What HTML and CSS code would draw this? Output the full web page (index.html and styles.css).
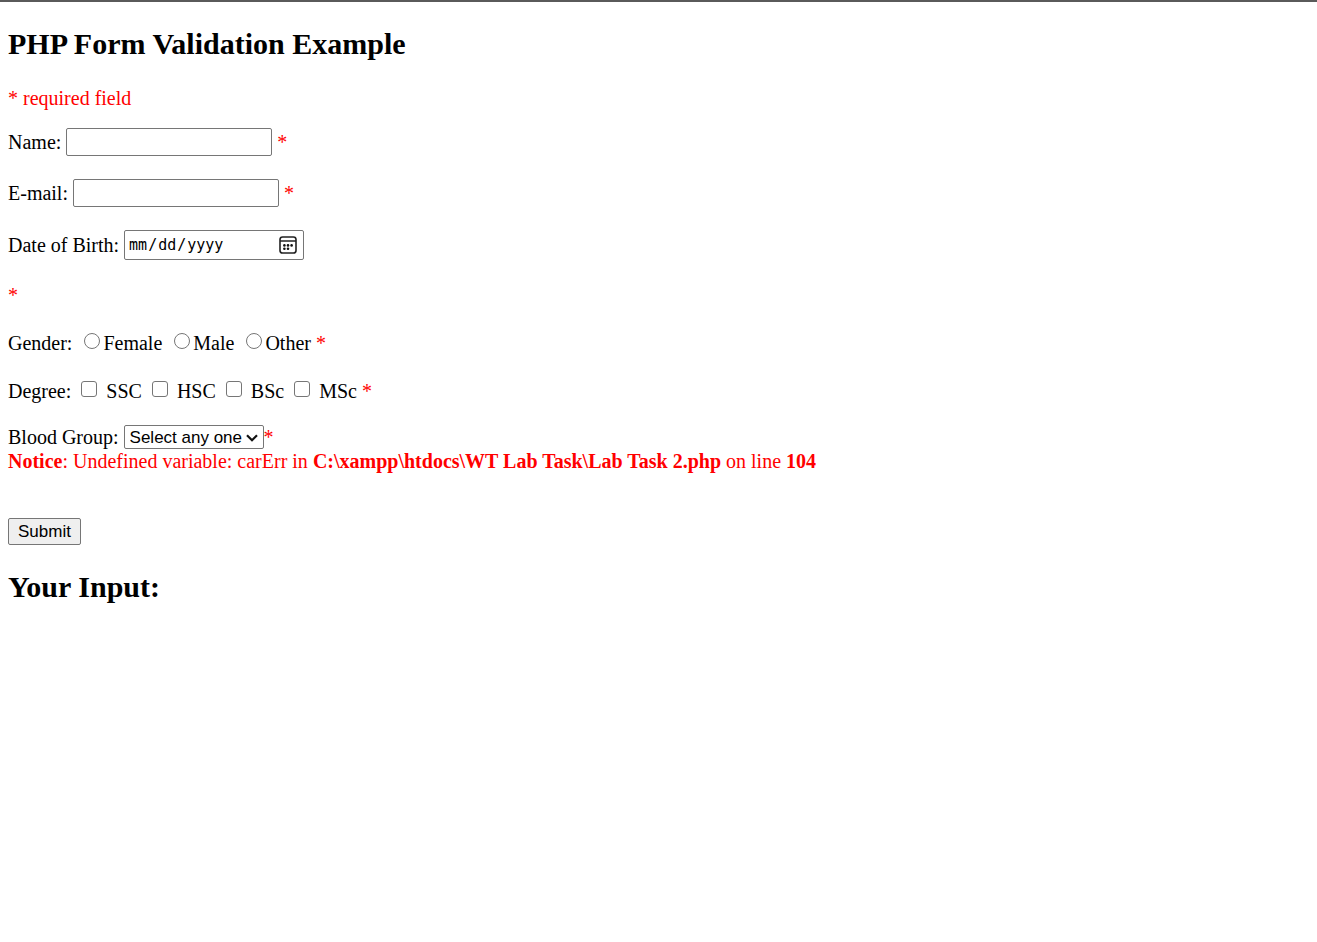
FILE: index.html
```html
<!DOCTYPE html>
<html lang="en">
<head>
<meta charset="utf-8">
<title>PHP Form Validation Example</title>
<link rel="stylesheet" href="styles.css">
</head>
<body class="page">
<h2 class="title">PHP Form Validation Example</h2>
<p class="note error">* required field</p>
<form class="form">
  <div class="row">
    <label for="name">Name:</label>
    <input class="text-box" id="name" name="name" type="text">
    <span class="error">*</span>
  </div>
  <div class="row">
    <label for="email">E-mail:</label>
    <input class="text-box" id="email" name="email" type="text">
    <span class="error">*</span>
  </div>
  <div class="row">
    <label for="dob">Date of Birth:</label>
    <span class="overlay-box">
      <input class="date-box" id="dob" name="dob" type="date">
      <svg class="calendar" viewBox="0 0 18 18" width="18" height="18" aria-hidden="true">
        <rect x="1" y="1" width="16" height="16" rx="2.6" fill="none" stroke="#222" stroke-width="1.6"/>
        <path d="M1 5H17" stroke="#222" stroke-width="1.5"/>
        <g fill="#111"><circle cx="5.4" cy="9.4" r="1.3"/><circle cx="9" cy="9.4" r="1.3"/><circle cx="12.6" cy="9.4" r="1.3"/><circle cx="5.4" cy="12.8" r="1.3"/><circle cx="9" cy="12.8" r="1.3"/></g>
      </svg>
    </span>
  </div>
  <div class="row"><span class="error">*</span></div>
  <div class="row choices" role="radiogroup" aria-labelledby="gender-label">
    <span id="gender-label">Gender:</span>
    <label class="radio-option"><input class="tick radio" type="radio" name="gender" value="female">Female</label>
    <label class="radio-option"><input class="tick radio" type="radio" name="gender" value="male">Male</label>
    <label class="radio-option"><input class="tick radio" type="radio" name="gender" value="other">Other</label>
    <span class="error">*</span>
  </div>
  <div class="row choices" role="group" aria-labelledby="degree-label">
    <span id="degree-label">Degree:</span>
    <label class="check-option"><input class="tick" type="checkbox" name="degree" value="ssc">SSC</label>
    <label class="check-option"><input class="tick" type="checkbox" name="degree" value="hsc">HSC</label>
    <label class="check-option"><input class="tick" type="checkbox" name="degree" value="bsc">BSc</label>
    <label class="check-option"><input class="tick" type="checkbox" name="degree" value="msc">MSc</label>
    <span class="error">*</span>
  </div>
  <div class="blood">
    <div class="row">
      <label for="blood">Blood Group:</label>
      <span class="select-group">
        <span class="overlay-box">
          <select class="select-box" id="blood" name="blood"><option>Select any one</option></select>
          <svg class="chevron" viewBox="0 0 12 8" width="12" height="8" aria-hidden="true"><path d="M1 1.2 6 6.2 11 1.2" fill="none" stroke="#111" stroke-width="2.2"/></svg>
        </span>
        <span class="error">*</span>
      </span>
    </div>
    <div class="error"><b>Notice</b>: Undefined variable: carErr in <b>C:\xampp\htdocs\WT Lab Task\Lab Task 2.php</b> on line <b>104</b></div>
  </div>
  <button class="submit" type="submit">Submit</button>
</form>
<h2 class="title">Your Input:</h2>
</body>
</html>
```
FILE: styles.css
```css
.page {
  margin: 0;
  padding: 0 8px;
  border-top: 2px solid #5a5a5a;
  background: #fff;
  color: #000;
  font: 20px/24px "Liberation Serif", "Times New Roman", serif;
}
.title {
  margin: 24px 0;
  font-size: 30px;
  line-height: 36px;
}
.note { margin: 0 0 18px; }
.error { color: #f00; }
.form {
  display: flex;
  flex-direction: column;
  align-items: flex-start;
  gap: 23px;
}
.row {
  display: flex;
  align-items: center;
  gap: 5px;
}
.text-box,
.date-box,
.select-box,
.submit {
  box-sizing: border-box;
  margin: 0;
  border: 1px solid #767676;
  border-radius: 2px;
  color: #000;
  font: 17px "Liberation Sans", Arial, sans-serif;
}
.text-box {
  width: 206px;
  height: 28px;
  padding: 1px 3px;
  background: #fff;
}
.overlay-box {
  display: flex;
  position: relative;
}
.date-box {
  width: 180px;
  height: 30px;
  padding: 1px 3px;
  background: #fff;
  font: 15px "DejaVu Sans Mono", monospace;
}
.date-box::-webkit-calendar-picker-indicator { opacity: 0; }
.calendar {
  position: absolute;
  top: 6px;
  right: 7px;
  pointer-events: none;
}
.choices { margin-top: 1px; }
.radio-option,
.check-option {
  display: flex;
  align-items: center;
}
.radio-option {
  gap: 3px;
  margin-left: 7px;
}
.check-option {
  gap: 9px;
  margin-left: 5px;
}
.tick {
  appearance: none;
  box-sizing: border-box;
  width: 16px;
  height: 16px;
  margin: 0 0 4px;
  border: 1px solid #767676;
  border-radius: 3px;
  background: #fff;
}
.tick:checked { background: #0075ff; }
.radio { border-radius: 50%; }
.blood { margin-top: -1px; }
.select-group {
  display: flex;
  align-items: center;
}
.select-box {
  appearance: none;
  width: 140px;
  height: 24px;
  padding: 0 20px 0 5px;
  background: #fff;
}
.chevron {
  position: absolute;
  top: 9px;
  right: 6px;
  pointer-events: none;
}
.submit {
  height: 27px;
  margin-top: 22px;
  padding: 0 9px;
  background: #efefef;
}
```
